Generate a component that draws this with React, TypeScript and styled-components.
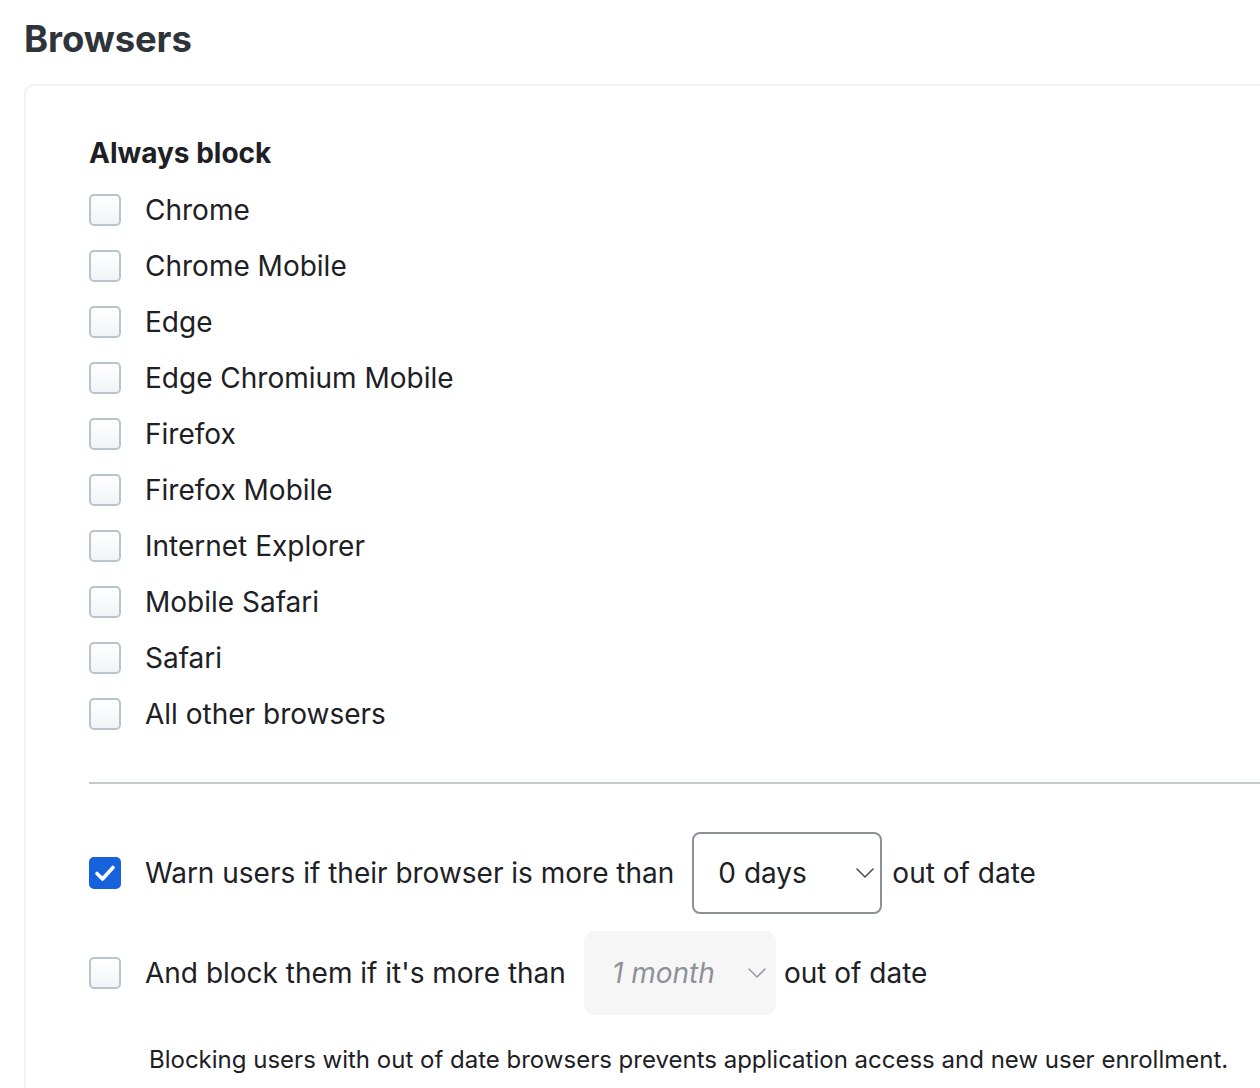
import React from "react";
import styled, { createGlobalStyle } from "styled-components";

const Global = createGlobalStyle`
  html, body {
    margin: 0;
    padding: 0;
    background: #ffffff;
    overflow: hidden;
  }
  body {
    font-family: Inter, "Noto Sans", "Liberation Sans", sans-serif;
    color: #1d2025;
  }
`;

const Page = styled.div`
  padding: 13px 0 0 24px;
  width: 1400px;
`;

const Title = styled.h1`
  margin: 0 0 19px 0;
  font-size: 36.5px;
  line-height: 52px;
  font-weight: 700;
  color: #2f343a;
  letter-spacing: -0.1px;
`;

const Card = styled.section`
  border: 2px solid #f2f2f3;
  border-radius: 10px;
  padding: 49px 63px 60px 63px;
  min-height: 1100px;
`;

const GroupTitle = styled.h2`
  margin: 0 0 23px 0;
  font-size: 28px;
  line-height: 36px;
  font-weight: 700;
  color: #1d2025;
`;

const List = styled.div`
  display: flex;
  flex-direction: column;
  gap: 24px;
`;

const Row = styled.label`
  display: flex;
  align-items: center;
  gap: 24px;
  font-size: 28px;
  line-height: 32px;
  color: #1d2025;
`;

const Sentence = styled.span`
  display: flex;
  align-items: center;
  white-space: nowrap;
`;

const Box = styled.span<{ $checked?: boolean }>`
  flex: none;
  width: 32px;
  height: 32px;
  box-sizing: border-box;
  border-radius: 5px;
  border: 2px solid ${(p) => (p.$checked ? "#1662dd" : "#b9c4cf")};
  background: ${(p) =>
    p.$checked ? "#1662dd" : "linear-gradient(#ffffff, #f1f3f6)"};
  display: flex;
  align-items: center;
  justify-content: center;
`;

const Divider = styled.hr`
  border: none;
  height: 2px;
  background: #c6c9cc;
  margin: 52px 0 48px 0;
`;

const Options = styled.div`
  display: flex;
  flex-direction: column;
  gap: 17px;
`;

const InlineText = styled.span`
  white-space: nowrap;
`;

const Select = styled.div<{ $disabled?: boolean }>`
  box-sizing: border-box;
  width: ${(p) => (p.$disabled ? "192px" : "190px")};
  height: ${(p) => (p.$disabled ? "84px" : "82px")};
  margin: 0 ${(p) => (p.$disabled ? "8px" : "10px")} 0 18px;
  border-radius: ${(p) => (p.$disabled ? "10px" : "8px")};
  border: ${(p) => (p.$disabled ? "none" : "2px solid #8b9198")};
  background: ${(p) => (p.$disabled ? "#f6f6f7" : "#ffffff")};
  display: flex;
  align-items: center;
  justify-content: space-between;
  padding: 0 ${(p) => (p.$disabled ? "10px" : "6px")} 0
    ${(p) => (p.$disabled ? "28px" : "24px")};
  font-size: 28px;
  line-height: 32px;
  font-style: ${(p) => (p.$disabled ? "italic" : "normal")};
  color: ${(p) => (p.$disabled ? "#8d9298" : "#1d2025")};
`;

const Note = styled.p`
  margin: 30px 0 0 60px;
  font-size: 24px;
  line-height: 30px;
  color: #1d2025;
  white-space: nowrap;
`;

const Chevron = ({ color }: { color: string }) => (
  <svg width="18" height="10" viewBox="0 0 18 10" fill="none">
    <polyline
      points="1,1 9,9 17,1"
      stroke={color}
      strokeWidth="1.6"
      strokeLinecap="round"
      strokeLinejoin="round"
    />
  </svg>
);

const Check = () => (
  <svg width="22" height="18" viewBox="0 0 22 18" fill="none">
    <polyline
      points="3,9.5 8.5,15 19,3.5"
      stroke="#ffffff"
      strokeWidth="3.6"
      strokeLinecap="round"
      strokeLinejoin="round"
    />
  </svg>
);

const browsers = [
  "Chrome",
  "Chrome Mobile",
  "Edge",
  "Edge Chromium Mobile",
  "Firefox",
  "Firefox Mobile",
  "Internet Explorer",
  "Mobile Safari",
  "Safari",
  "All other browsers",
];

export default function App() {
  return (
    <>
      <Global />
      <Page>
        <Title>Browsers</Title>
        <Card>
          <GroupTitle>Always block</GroupTitle>
          <List>
            {browsers.map((b) => (
              <Row key={b}>
                <Box />
                <InlineText>{b}</InlineText>
              </Row>
            ))}
          </List>
          <Divider />
          <Options>
            <Row>
              <Box $checked>
                <Check />
              </Box>
              <Sentence>
                <span>Warn users if their browser is more than</span>
                <Select>
                  <span>0 days</span>
                  <Chevron color="#4b5056" />
                </Select>
                <span>out of date</span>
              </Sentence>
            </Row>
            <Row>
              <Box />
              <Sentence>
                <span>And block them if it's more than</span>
                <Select $disabled>
                  <span>1 month</span>
                  <Chevron color="#9a9ea4" />
                </Select>
                <span>out of date</span>
              </Sentence>
            </Row>
          </Options>
          <Note>
            Blocking users with out of date browsers prevents application
            access and new user enrollment.
          </Note>
        </Card>
      </Page>
    </>
  );
}
